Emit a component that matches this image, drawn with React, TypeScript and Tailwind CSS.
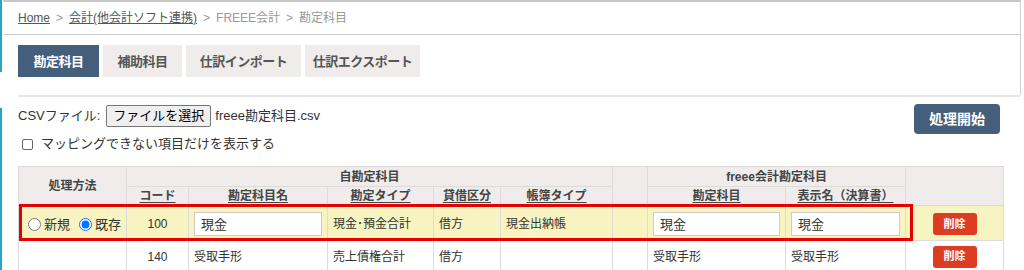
import React from 'react';

const font = { fontFamily: '"Liberation Sans", "Noto Sans CJK JP", sans-serif' };

const tabs = [
  { label: '勘定科目', w: 'w-[81px]' },
  { label: '補助科目', w: 'w-[79px]' },
  { label: '仕訳インポート', w: 'w-[115px]' },
  { label: '仕訳エクスポート', w: 'w-[115px]' },
];

function Tab({ label, w, active }: { label: string; w: string; active?: boolean }) {
  return (
    <div
      className={
        w +
        ' h-[32px] flex items-center justify-center text-[13px] font-bold leading-none tracking-[-0.5px] ' +
        (active ? 'bg-[#445f7c] text-white' : 'bg-[#efeceb] text-[#555]')
      }
    >
      {label}
    </div>
  );
}

function DeleteButton() {
  return (
    <button className="w-[44px] h-[22px] rounded-[3px] bg-[#dc3d22] text-white text-[11px] font-bold leading-none align-middle">
      削除
    </button>
  );
}

const th = 'border border-[#dedcdb] bg-[#efeceb] text-[12px] font-bold text-[#444] px-1 leading-none align-middle';
const thu = th + ' underline underline-offset-2';
const td = 'border border-[#dedcdb] text-[12px] text-[#333] px-[5px] pt-[2px] leading-none align-middle';
const box = 'h-[24px] border border-[#ccc] bg-white flex items-center px-[6px] text-[13px]';

export default function App() {
  return (
    <div className="relative w-[1024px] h-[270px] overflow-hidden bg-white" style={font}>
      {/* left accent and right rule */}
      <div className="absolute left-0 top-0 w-[2px] h-[72px] bg-[#2aa3c0]" />
      <div className="absolute left-0 top-[108px] w-[2px] h-[162px] bg-[#2aa3c0]" />
      <div className="absolute right-[3px] top-0 w-px h-[95px] bg-[#d0d0d0]" />

      <div className="border-t-2 border-[#c8c8c8] mx-[3px]">
        <div className="h-[32px] flex items-center pl-[15px] text-[12px] text-[#999] gap-[6px]">
          <span className="text-[#555] underline">Home</span>
          <span>&gt;</span>
          <span className="text-[#555] underline">会計(他会計ソフト連携)</span>
          <span>&gt;</span>
          <span>FREEE会計</span>
          <span>&gt;</span>
          <span>勘定科目</span>
        </div>
        <div className="border-t border-[#cfcfcf]" />
      </div>

      <div className="pl-[18px] pr-[4px] pt-[10px]">
        <div className="flex gap-[4px]">
          {tabs.map((t, i) => (
            <Tab key={t.label} label={t.label} w={t.w} active={i === 0} />
          ))}
        </div>
        <div className="mt-[18px] border-t-2 border-[#e6e6e6]" />

        <div className="flex justify-between pr-[20px] pt-[7px]">
          <div>
            <div className="flex items-center text-[13px] text-[#333] h-[24px]">
              <span>CSVファイル:</span>
              <span className="ml-[6px] h-[22px] px-[6px] flex items-center border border-[#767676] rounded-[2px] bg-[#efefef] text-[13px] text-black">
                ファイルを選択
              </span>
              <span className="ml-[4px]">freee勘定科目.csv</span>
            </div>
            <div className="flex items-center mt-[8px] h-[16px] text-[13px] text-[#333]">
              <span className="ml-[4px] w-[11px] h-[11px] border border-[#666] rounded-[2px] bg-white" />
              <span className="ml-[8px]">マッピングできない項目だけを表示する</span>
            </div>
          </div>
          <button className="w-[86px] h-[30px] rounded-[4px] bg-[#445f7c] text-white text-[14px] font-bold leading-none">
            処理開始
          </button>
        </div>

        <table className="mt-[14px] border-collapse table-fixed w-[985px]">
          <colgroup>
            <col className="w-[108px]" />
            <col className="w-[62px]" />
            <col className="w-[139px]" />
            <col className="w-[106px]" />
            <col className="w-[67px]" />
            <col className="w-[112px]" />
            <col className="w-[35px]" />
            <col className="w-[138px]" />
            <col className="w-[120px]" />
            <col className="w-[98px]" />
          </colgroup>
          <thead>
            <tr className="h-[20px]">
              <th rowSpan={2} className={th}>処理方法</th>
              <th colSpan={5} className={th}>自勘定科目</th>
              <th rowSpan={2} className={th}></th>
              <th colSpan={2} className={th}>freee会計勘定科目</th>
              <th rowSpan={2} className={th}></th>
            </tr>
            <tr className="h-[19px]">
              <th className={thu}>コード</th>
              <th className={thu}>勘定科目名</th>
              <th className={thu}>勘定タイプ</th>
              <th className={thu}>貸借区分</th>
              <th className={thu}>帳簿タイプ</th>
              <th className={thu}>勘定科目</th>
              <th className={thu}>表示名（決算書）</th>
            </tr>
          </thead>
          <tbody>
            <tr className="h-[35px] bg-[#f7f4c2]">
              <td className={td + ' pl-[9px] pr-0'}>
                <div className="flex items-center gap-[3px] text-[13px] whitespace-nowrap">
                  <input type="radio" name="m" className="m-0 w-[13px] h-[13px] shrink-0" />
                  <span>新規</span>
                  <input type="radio" name="m" defaultChecked className="m-0 ml-[6px] w-[13px] h-[13px] shrink-0" />
                  <span>既存</span>
                </div>
              </td>
              <td className={td + ' text-center'}>100</td>
              <td className={td}>
                <div className={box}>現金</div>
              </td>
              <td className={td}>現金･預金合計</td>
              <td className={td}>借方</td>
              <td className={td}>現金出納帳</td>
              <td className={td}></td>
              <td className={td}>
                <div className={box}>現金</div>
              </td>
              <td className={td}>
                <div className={box}>現金</div>
              </td>
              <td className={td + ' text-center'}>
                <DeleteButton />
              </td>
            </tr>
            <tr className="h-[30px]">
              <td className={td}></td>
              <td className={td + ' text-center'}>140</td>
              <td className={td}>受取手形</td>
              <td className={td}>売上債権合計</td>
              <td className={td}>借方</td>
              <td className={td}></td>
              <td className={td}></td>
              <td className={td}>受取手形</td>
              <td className={td}>受取手形</td>
              <td className={td + ' text-center'}>
                <DeleteButton />
              </td>
            </tr>
          </tbody>
        </table>
      </div>

      {/* annotation box */}
      <div className="absolute left-[19px] top-[204px] w-[894px] h-[37px] border-[3px] border-[#e60000]" />
    </div>
  );
}
